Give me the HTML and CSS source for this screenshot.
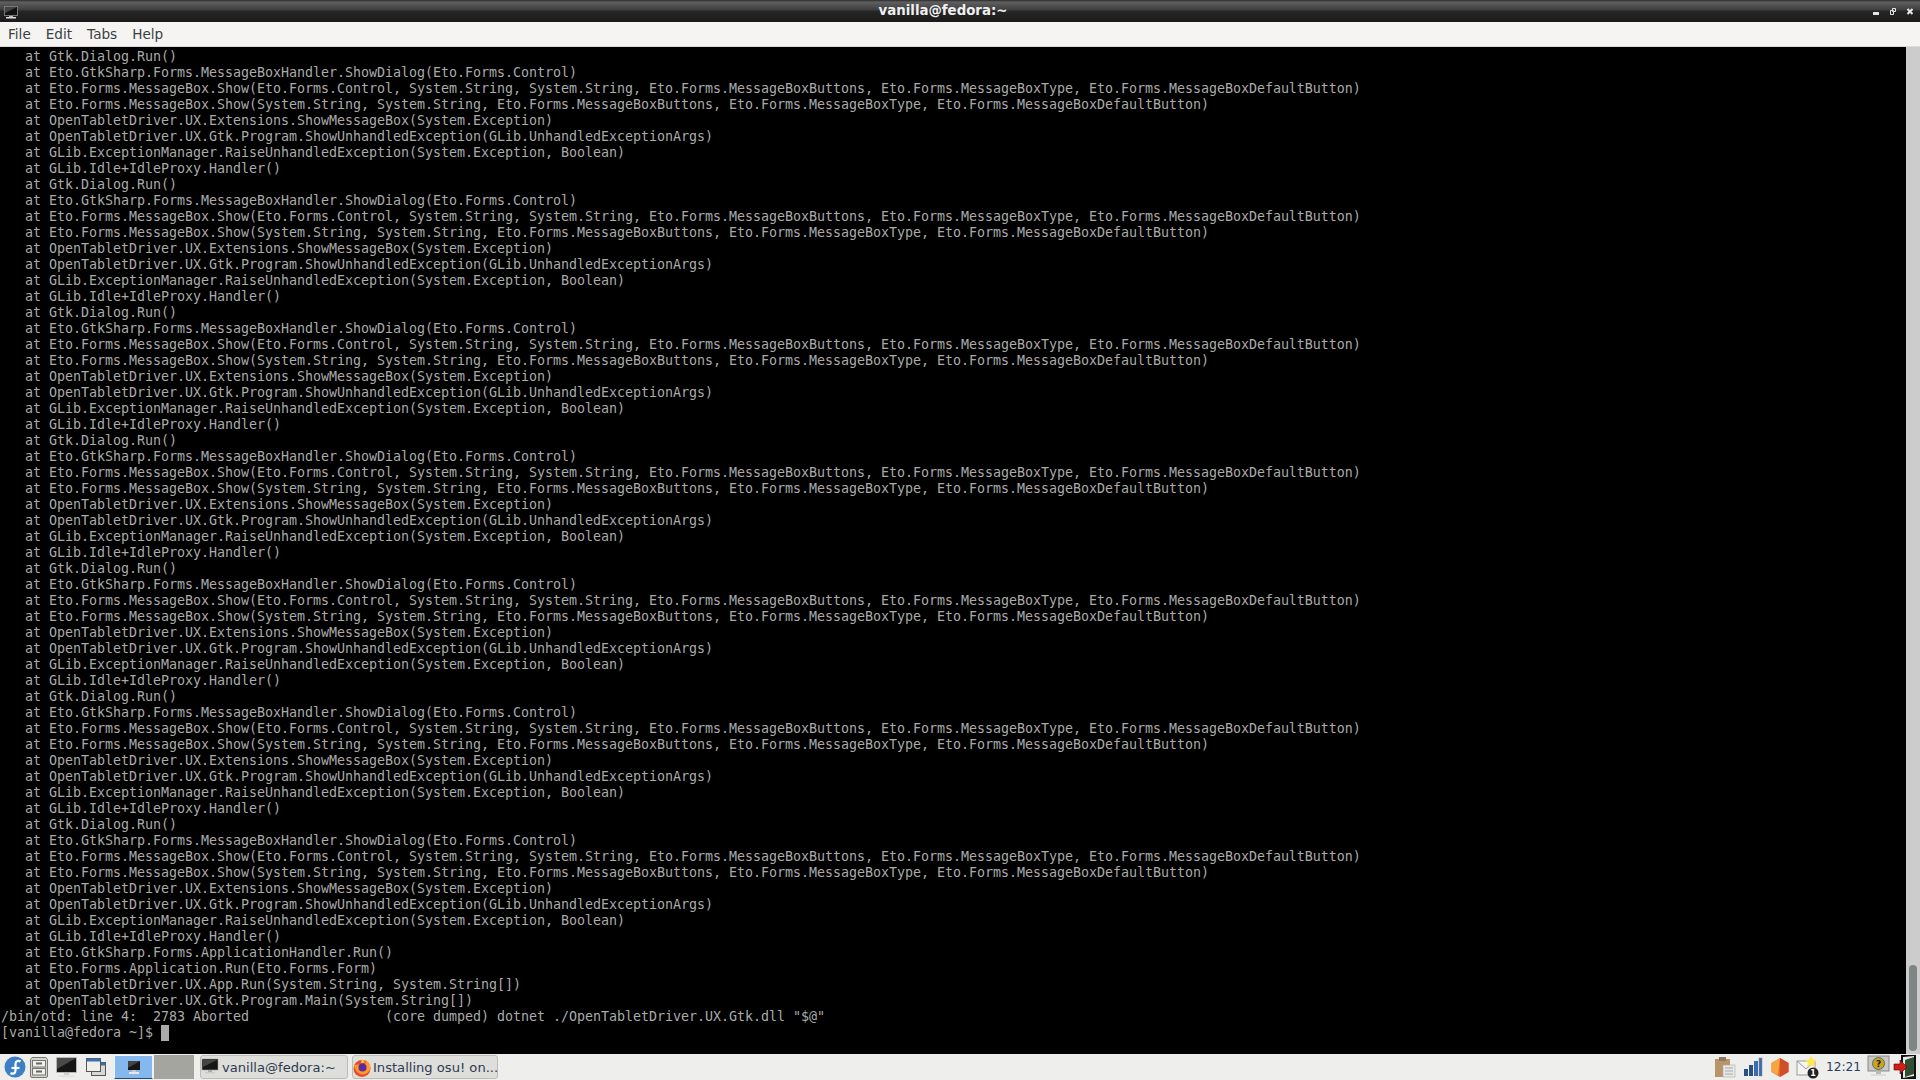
FILE: index.html
```html
<!DOCTYPE html>
<html lang="en">
<head>
<meta charset="utf-8">
<title>vanilla@fedora:~</title>
<link rel="stylesheet" href="styles.css">
</head>
<body>
<div class="window">
  <header class="titlebar">
    <svg class="title-icon" width="14" height="13" viewBox="0 0 14 13"><rect x=".5" y=".5" width="13" height="9" fill="#111" stroke="#777"/><path d="M1 1h12L1 7z" fill="#444"/><rect x="5" y="10" width="4" height="1" fill="#bbb"/><rect x="2" y="11" width="10" height="1.500" fill="#ddd"/></svg>
    <div class="title-text">vanilla@fedora:~</div>
    <div class="title-buttons">
      <svg width="6" height="7" viewBox="0 0 6 7"><rect y="4" width="6" height="3" fill="#e6e6e6"/></svg>
      <svg width="6" height="7" viewBox="0 0 6 7"><path d="M2.500.5h3v3h-3zM.5 2.500h3v4h-3z" fill="none" stroke="#e6e6e6"/></svg>
      <svg width="6" height="7" viewBox="0 0 6 7"><path d="M.5 1l5 5M5.500 1l-5 5" stroke="#e6e6e6" stroke-width="2"/></svg>
    </div>
  </header>
  <nav class="menubar"><span>File</span><span>Edit</span><span>Tabs</span><span>Help</span></nav>
  <main class="term-area">
<pre class="term">   at Gtk.Dialog.Run()
   at Eto.GtkSharp.Forms.MessageBoxHandler.ShowDialog(Eto.Forms.Control)
   at Eto.Forms.MessageBox.Show(Eto.Forms.Control, System.String, System.String, Eto.Forms.MessageBoxButtons, Eto.Forms.MessageBoxType, Eto.Forms.MessageBoxDefaultButton)
   at Eto.Forms.MessageBox.Show(System.String, System.String, Eto.Forms.MessageBoxButtons, Eto.Forms.MessageBoxType, Eto.Forms.MessageBoxDefaultButton)
   at OpenTabletDriver.UX.Extensions.ShowMessageBox(System.Exception)
   at OpenTabletDriver.UX.Gtk.Program.ShowUnhandledException(GLib.UnhandledExceptionArgs)
   at GLib.ExceptionManager.RaiseUnhandledException(System.Exception, Boolean)
   at GLib.Idle+IdleProxy.Handler()
   at Gtk.Dialog.Run()
   at Eto.GtkSharp.Forms.MessageBoxHandler.ShowDialog(Eto.Forms.Control)
   at Eto.Forms.MessageBox.Show(Eto.Forms.Control, System.String, System.String, Eto.Forms.MessageBoxButtons, Eto.Forms.MessageBoxType, Eto.Forms.MessageBoxDefaultButton)
   at Eto.Forms.MessageBox.Show(System.String, System.String, Eto.Forms.MessageBoxButtons, Eto.Forms.MessageBoxType, Eto.Forms.MessageBoxDefaultButton)
   at OpenTabletDriver.UX.Extensions.ShowMessageBox(System.Exception)
   at OpenTabletDriver.UX.Gtk.Program.ShowUnhandledException(GLib.UnhandledExceptionArgs)
   at GLib.ExceptionManager.RaiseUnhandledException(System.Exception, Boolean)
   at GLib.Idle+IdleProxy.Handler()
   at Gtk.Dialog.Run()
   at Eto.GtkSharp.Forms.MessageBoxHandler.ShowDialog(Eto.Forms.Control)
   at Eto.Forms.MessageBox.Show(Eto.Forms.Control, System.String, System.String, Eto.Forms.MessageBoxButtons, Eto.Forms.MessageBoxType, Eto.Forms.MessageBoxDefaultButton)
   at Eto.Forms.MessageBox.Show(System.String, System.String, Eto.Forms.MessageBoxButtons, Eto.Forms.MessageBoxType, Eto.Forms.MessageBoxDefaultButton)
   at OpenTabletDriver.UX.Extensions.ShowMessageBox(System.Exception)
   at OpenTabletDriver.UX.Gtk.Program.ShowUnhandledException(GLib.UnhandledExceptionArgs)
   at GLib.ExceptionManager.RaiseUnhandledException(System.Exception, Boolean)
   at GLib.Idle+IdleProxy.Handler()
   at Gtk.Dialog.Run()
   at Eto.GtkSharp.Forms.MessageBoxHandler.ShowDialog(Eto.Forms.Control)
   at Eto.Forms.MessageBox.Show(Eto.Forms.Control, System.String, System.String, Eto.Forms.MessageBoxButtons, Eto.Forms.MessageBoxType, Eto.Forms.MessageBoxDefaultButton)
   at Eto.Forms.MessageBox.Show(System.String, System.String, Eto.Forms.MessageBoxButtons, Eto.Forms.MessageBoxType, Eto.Forms.MessageBoxDefaultButton)
   at OpenTabletDriver.UX.Extensions.ShowMessageBox(System.Exception)
   at OpenTabletDriver.UX.Gtk.Program.ShowUnhandledException(GLib.UnhandledExceptionArgs)
   at GLib.ExceptionManager.RaiseUnhandledException(System.Exception, Boolean)
   at GLib.Idle+IdleProxy.Handler()
   at Gtk.Dialog.Run()
   at Eto.GtkSharp.Forms.MessageBoxHandler.ShowDialog(Eto.Forms.Control)
   at Eto.Forms.MessageBox.Show(Eto.Forms.Control, System.String, System.String, Eto.Forms.MessageBoxButtons, Eto.Forms.MessageBoxType, Eto.Forms.MessageBoxDefaultButton)
   at Eto.Forms.MessageBox.Show(System.String, System.String, Eto.Forms.MessageBoxButtons, Eto.Forms.MessageBoxType, Eto.Forms.MessageBoxDefaultButton)
   at OpenTabletDriver.UX.Extensions.ShowMessageBox(System.Exception)
   at OpenTabletDriver.UX.Gtk.Program.ShowUnhandledException(GLib.UnhandledExceptionArgs)
   at GLib.ExceptionManager.RaiseUnhandledException(System.Exception, Boolean)
   at GLib.Idle+IdleProxy.Handler()
   at Gtk.Dialog.Run()
   at Eto.GtkSharp.Forms.MessageBoxHandler.ShowDialog(Eto.Forms.Control)
   at Eto.Forms.MessageBox.Show(Eto.Forms.Control, System.String, System.String, Eto.Forms.MessageBoxButtons, Eto.Forms.MessageBoxType, Eto.Forms.MessageBoxDefaultButton)
   at Eto.Forms.MessageBox.Show(System.String, System.String, Eto.Forms.MessageBoxButtons, Eto.Forms.MessageBoxType, Eto.Forms.MessageBoxDefaultButton)
   at OpenTabletDriver.UX.Extensions.ShowMessageBox(System.Exception)
   at OpenTabletDriver.UX.Gtk.Program.ShowUnhandledException(GLib.UnhandledExceptionArgs)
   at GLib.ExceptionManager.RaiseUnhandledException(System.Exception, Boolean)
   at GLib.Idle+IdleProxy.Handler()
   at Gtk.Dialog.Run()
   at Eto.GtkSharp.Forms.MessageBoxHandler.ShowDialog(Eto.Forms.Control)
   at Eto.Forms.MessageBox.Show(Eto.Forms.Control, System.String, System.String, Eto.Forms.MessageBoxButtons, Eto.Forms.MessageBoxType, Eto.Forms.MessageBoxDefaultButton)
   at Eto.Forms.MessageBox.Show(System.String, System.String, Eto.Forms.MessageBoxButtons, Eto.Forms.MessageBoxType, Eto.Forms.MessageBoxDefaultButton)
   at OpenTabletDriver.UX.Extensions.ShowMessageBox(System.Exception)
   at OpenTabletDriver.UX.Gtk.Program.ShowUnhandledException(GLib.UnhandledExceptionArgs)
   at GLib.ExceptionManager.RaiseUnhandledException(System.Exception, Boolean)
   at GLib.Idle+IdleProxy.Handler()
   at Eto.GtkSharp.Forms.ApplicationHandler.Run()
   at Eto.Forms.Application.Run(Eto.Forms.Form)
   at OpenTabletDriver.UX.App.Run(System.String, System.String[])
   at OpenTabletDriver.UX.Gtk.Program.Main(System.String[])
/bin/otd: line 4:  2783 Aborted                 (core dumped) dotnet ./OpenTabletDriver.UX.Gtk.dll "$@"
[vanilla@fedora ~]$ <span class="cursor"> </span></pre>
    <div class="scrollbar"><div class="thumb"></div></div>
  </main>
  <footer class="taskbar">
    <div class="launchers">
      <svg class="ic-fedora" width="22" height="22" viewBox="0 0 22 22"><circle cx="11" cy="11" r="10.500" fill="#3c7fc4"/><path d="M16.500 5.500c-2-1.500-5-.5-5 2.500v6.500c0 3-2.500 4-5 2.500" fill="none" stroke="#fff" stroke-width="2.200"/><path d="M7.500 12h8" stroke="#fff" stroke-width="2.200"/><path d="M1 11h5v2.500c0 .5 0 2-1 4-3-2-4-4-4-6.500z" fill="#3c7fc4"/></svg>
      <svg class="ic-cab" width="18" height="21" viewBox="0 0 18 21"><path d="M2 .5h14l1.500 2V19a1.500 1.500 0 0 1-1.500 1.500H2A1.500 1.500 0 0 1 .5 19V2.500z" fill="#d3d3cf" stroke="#77776f"/><rect x="2.500" y="3.500" width="13" height="6.500" fill="#efefec" stroke="#77776f"/><rect x="2.500" y="11.500" width="13" height="6.500" fill="#efefec" stroke="#77776f"/><rect x="6" y="5.500" width="6" height="2" fill="#666"/><rect x="6" y="13.500" width="6" height="2" fill="#666"/></svg>
      <svg class="ic-mon" width="21" height="21" viewBox="0 0 21 21"><rect x=".5" y=".5" width="20" height="15" fill="#161616" stroke="#ccc" stroke-width=".7"/><path d="M1 1h19L1 12z" fill="#4a4a4a"/><rect x="8" y="16" width="5" height="2" fill="#ccc"/><ellipse cx="10.500" cy="19" rx="9" ry="1.500" fill="#e3e3e3"/></svg>
      <svg class="ic-win" width="20" height="18" viewBox="0 0 20 18"><rect x="5.500" y="4.500" width="14" height="13" fill="#d8d8d4" stroke="#555"/><rect x="5.500" y="4.500" width="14" height="3" fill="#3d6eaa"/><rect x=".5" y=".5" width="14" height="13" fill="#eeeeea" stroke="#555"/><rect x=".5" y=".5" width="14" height="3" fill="#3d6eaa"/></svg>
    </div>
    <div class="pager">
      <div class="desk desk-active"><svg width="14" height="15" viewBox="0 0 14 15"><rect x="1" y="1" width="12" height="9" fill="#161616"/><path d="M1 1h12L1 8z" fill="#444"/><rect x="5" y="10" width="4" height="2" fill="#ccc"/><rect x="2" y="12" width="10" height="2" fill="#e8e8e8"/></svg></div>
      <div class="desk"></div>
    </div>
    <div class="tasks">
      <div class="task task-term"><svg width="18" height="18" viewBox="0 0 18 18"><rect x="1" y="1" width="16" height="11" fill="#161616" stroke="#999" stroke-width=".6"/><path d="M2 2h14L2 9z" fill="#444"/><rect x="7" y="12" width="4" height="2" fill="#aaa"/><rect x="4" y="14" width="10" height="1.500" fill="#ccc"/></svg><span>vanilla@fedora:~</span></div>
      <div class="task task-fox"><svg width="18" height="19" viewBox="0 0 18 19"><circle cx="9" cy="10.500" r="8.500" fill="#ea4b2f"/><path d="M1 7c1 8 8 12 14 7.500 2-2 3-5 2-8-1-2-3-4-5-5 1 2 1 3 0 4.500z" fill="#ff9b2a"/><circle cx="9.500" cy="9.500" r="4" fill="#5a2a9e"/><path d="M9 .5l3 4-4 .5z" fill="#ffd23f"/></svg><span>Installing osu! on...</span></div>
    </div>
    <div class="tray">
      <svg width="22" height="22" viewBox="0 0 22 22"><rect x="1" y="3" width="15" height="18" fill="#b99469"/><rect x="5" y="1" width="7" height="4" fill="#8c7a60"/><rect x="9" y="9" width="12" height="12" fill="#e6e7e6" stroke="#aaa" stroke-width=".6"/><path d="M11 12h8M11 15h8M11 18h8" stroke="#aaa"/></svg>
      <svg class="tray-wide" width="20" height="20" viewBox="0 0 20 20"><rect x="1" y="12" width="4" height="7" fill="#2c4f80"/><rect x="6" y="8" width="4" height="11" fill="#2c4f80"/><rect x="11" y="4" width="4" height="15" fill="#3b6cb0"/><rect x="16" y="1" width="3" height="18" fill="#3b6cb0" stroke="#888" stroke-width=".5"/></svg>
      <svg class="tray-wide" width="20" height="21" viewBox="0 0 20 21"><path d="M10 1l8.500 5v9L10 20l-8.500-5V6z" fill="#e96a2c"/><path d="M10 1l8.500 5v9L10 20z" fill="#d04f2b"/><path d="M10 1L1.500 6v9L8 18z" fill="#f6a63e"/></svg>
      <svg width="24" height="24" viewBox="0 0 24 24"><rect x="1" y="6" width="18" height="14" fill="#f4f4f2" stroke="#999"/><path d="M1 6l9 8 9-8" fill="none" stroke="#999"/><path d="M15 1l2 3.500 4 .5-3 3 1 4-4-2-4 2 1-4-3-3 4-.5z" fill="#fce94f"/><circle cx="17" cy="18" r="5.500" fill="#222"/><text x="17" y="21" class="tray-num">1</text></svg>
      <span class="clock">12:21</span>
      <svg width="23" height="24" viewBox="0 0 23 24"><rect x="1" y="1" width="21" height="15" fill="#c8c8c4" stroke="#888"/><circle cx="11.500" cy="8.500" r="6" fill="#c9a520" stroke="#666"/><text x="11.500" y="11.500" class="tray-q">?</text><rect x="9" y="16" width="5" height="3" fill="#bbb"/><rect x="4" y="19" width="15" height="2" fill="#ddd"/></svg>
      <svg class="tray-tight" width="24" height="24" viewBox="0 0 24 24"><rect x="8" y="0" width="15" height="24" fill="#111"/><path d="M10 2l11-1v20l-11 2z" fill="#e8e8e6"/><path d="M12 5l9-3v17l-9 3z" fill="#2f4f35"/><path d="M1 9h6V5l7 7-7 7v-4H1z" fill="#cc1f1a" stroke="#500" stroke-width=".6"/></svg>
    </div>
  </footer>
</div>
</body>
</html>
```

FILE: styles.css
```css
html, body {
  margin: 0;
  padding: 0;
  height: 100%;
  overflow: hidden;
}
svg { flex: none; display: block; }
.window {
  display: flex;
  flex-direction: column;
  height: 1080px;
  font-family: "DejaVu Sans", sans-serif;
}
.titlebar {
  height: 22px;
  flex: none;
  display: flex;
  align-items: center;
  padding: 0 7px 0 4px;
  box-sizing: border-box;
  background: linear-gradient(#2a2a2a 0, #5f5f5f 2px, #3e3e3e 10px, #262626 11px, #1b1b1b 21px);
}
.title-icon { margin-top: 2px; }
.title-text {
  flex: 1;
  text-align: center;
  color: #f0f0f0;
  font-weight: bold;
  font-size: 13.33px;
  line-height: 20px;
  margin-left: -5px;
}
.title-buttons {
  display: flex;
  align-items: center;
  gap: 11px;
  margin-top: 1px;
}
.menubar {
  height: 25px;
  flex: none;
  box-sizing: border-box;
  background: #f5f4f2;
  border-bottom: 1px solid #dcdbd8;
  display: flex;
  align-items: center;
  gap: 15px;
  padding: 0 8px;
  font-size: 13.6px;
  color: #3a3f42;
}
.term-area {
  flex: 1;
  min-height: 0;
  display: flex;
  background: #000;
}
.term {
  flex: 1;
  margin: 0;
  padding: 2px 0 0 1px;
  font-family: "DejaVu Sans Mono", monospace;
  font-size: 13.33px;
  letter-spacing: -0.025px;
  line-height: 16px;
  color: #aaaaaa;
  overflow: hidden;
}
.cursor {
  display: inline-block;
  width: 8px;
  height: 16px;
  background: #aaaaaa;
  vertical-align: top;
}
.scrollbar {
  width: 14px;
  flex: none;
  background: #cccccc;
  position: relative;
}
.thumb {
  position: absolute;
  left: 3px;
  width: 8px;
  top: 918px;
  height: 86px;
  border-radius: 4px;
  background: #7f8484;
}
.taskbar {
  height: 26px;
  flex: none;
  background: #eeeeec;
  display: flex;
  align-items: center;
  font-size: 13.1px;
  color: #2e3a50;
}
.launchers {
  display: flex;
  align-items: center;
  padding-left: 4px;
  width: 114px;
  box-sizing: border-box;
  flex: none;
}
.ic-fedora { margin-right: 4px; }
.ic-cab { margin-right: 8px; }
.ic-mon { margin-right: 9px; }
.pager {
  display: flex;
  height: 24px;
  width: 80px;
  flex: none;
}
.desk {
  width: 40px;
  height: 24px;
  background: #a5a5a0;
  display: flex;
  align-items: center;
  justify-content: center;
  box-sizing: border-box;
}
.desk-active {
  width: 39px;
  background: #86b8f0;
  border: 1px solid #f2f6fb;
  border-bottom: 1px solid #244a78;
  margin-right: 1px;
}
.tasks {
  display: flex;
  gap: 4px;
  margin-left: 6px;
}
.task {
  height: 24px;
  box-sizing: border-box;
  border: 1px solid #bdbdb8;
  border-radius: 3px;
  background: #dededb;
  display: flex;
  align-items: center;
  gap: 2px;
  white-space: nowrap;
}
.task-term { width: 148px; gap: 3px; }
.task-fox { width: 146px; }
.tray {
  margin-left: auto;
  display: flex;
  align-items: center;
  gap: 6px;
  padding-right: 3px;
}
.tray-wide { margin-left: 1px; }
.tray-tight { margin-left: -3px; }
.clock {
  color: #2b3f63;
  font-size: 12.2px;
}
.tray-num {
  fill: #fff;
  font-size: 8px;
  font-weight: bold;
  text-anchor: middle;
}
.tray-q {
  fill: #222;
  font-size: 9px;
  font-weight: bold;
  text-anchor: middle;
}
```
